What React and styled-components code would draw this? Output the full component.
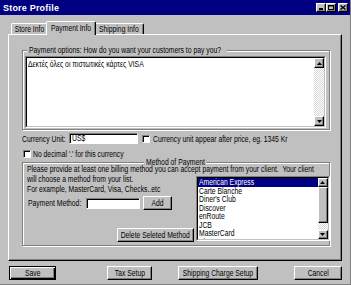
import React from 'react';
import styled, { createGlobalStyle } from 'styled-components';

const GlobalStyle = createGlobalStyle`
  html, body {
    margin: 0;
    padding: 0;
    background: #c0c0c0;
  }
  body {
    font-family: "Liberation Sans", Arial, sans-serif;
    font-size: 8.5px;
    color: #000;
  }
`;

// the dialog text is narrower than any installed face, so squeeze it
const T = styled.span`
  display: inline-block;
  white-space: pre;
  transform: scaleX(0.8);
  transform-origin: ${(p) => (p.$center ? 'center' : 'left')} center;
`;

const Window = styled.div`
  width: 351px;
  height: 285px;
  box-sizing: border-box;
  overflow: hidden;
  background: #c0c0c0;
  border-right: 1px solid #808080;
  border-bottom: 1px solid #808080;
  display: flex;
  flex-direction: column;
`;

const TitleBar = styled.div`
  height: 15px;
  flex-shrink: 0;
  background: #000080;
  display: flex;
  align-items: center;
  padding: 0 2px 0 3px;
`;

const Title = styled.span`
  flex: 1;
  color: #fff;
  font: bold 9px "Liberation Sans", Arial, sans-serif;
  letter-spacing: 0.2px;
`;

const CaptionButton = styled.div`
  width: 10px;
  height: 9px;
  box-sizing: border-box;
  margin-left: ${(p) => p.$gap || 0}px;
  background: #c0c0c0;
  border: 1px solid;
  border-color: #fff #000 #000 #fff;
  box-shadow: inset -1px -1px #808080;
  display: flex;
  align-items: center;
  justify-content: center;
`;

const TabRow = styled.div`
  height: 19px;
  flex-shrink: 0;
  display: flex;
  align-items: flex-end;
  padding-left: 11px;
  position: relative;
  z-index: 1;
`;

const Tab = styled.div`
  width: ${(p) => p.$w}px;
  height: ${(p) => (p.$active ? 14 : 11)}px;
  margin: 0 ${(p) => (p.$active ? -2 : 0)}px ${(p) => (p.$active ? -1 : 0)}px;
  box-sizing: border-box;
  background: #c0c0c0;
  border-top: 1px solid #fff;
  border-left: 1px solid #fff;
  border-right: 1px solid #000;
  box-shadow: inset -1px 0 #808080;
  border-radius: 2px 2px 0 0;
  display: flex;
  align-items: center;
  justify-content: center;
  padding-bottom: ${(p) => (p.$active ? 2 : 0)}px;
  position: relative;
  z-index: ${(p) => (p.$active ? 2 : 1)};
`;

const Panel = styled.div`
  height: 227px;
  flex-shrink: 0;
  margin: 0 8px;
  box-sizing: border-box;
  position: relative;
  z-index: 0;
  border-top: 1px solid #fff;
  border-left: 1px solid #fff;
  border-right: 1px solid #000;
  border-bottom: 1px solid #000;
  box-shadow: inset -1px -1px #808080;
  padding: 10px 11px 0 13px;
  display: flex;
  flex-direction: column;
`;

const Group = styled.fieldset`
  margin: ${(p) => p.$mt || 0}px 0 0;
  padding: ${(p) => p.$pad};
  min-width: 0;
  border: 1px solid #808080;
  box-shadow: inset 1px 1px #fff, 1px 1px #fff;
`;

const Legend = styled.legend`
  width: ${(p) => p.$w}px;
  box-sizing: border-box;
  padding: 0 2px;
  margin: ${(p) => (p.$center ? '0 auto' : '0 0 0 2px')};
  line-height: ${(p) => p.$lh}px;
  background: #c0c0c0;
  white-space: nowrap;
`;

const Sunken = styled.div`
  box-sizing: border-box;
  background: #fff;
  border: 1px solid;
  border-color: #808080 #fff #fff #808080;
`;

const SunkenInner = styled.div`
  height: 100%;
  box-sizing: border-box;
  border-top: 1px solid #000;
  border-left: 1px solid #000;
  border-right: 1px solid #c0c0c0;
  border-bottom: 1px solid #c0c0c0;
  display: flex;
`;

const TextArea = styled(Sunken)`
  height: 72px;
`;

const TextContent = styled.div`
  flex: 1;
  min-width: 0;
  padding: 1px 1px;
  line-height: 10px;
  white-space: nowrap;
`;

const ScrollBar = styled.div`
  width: 10px;
  flex-shrink: 0;
  display: flex;
  flex-direction: column;
  background-color: #fff;
  background-image: conic-gradient(#fff 25%, #d8d8d8 0 50%, #fff 0 75%, #d8d8d8 0);
  background-size: 2px 2px;
`;

const ScrollArrow = styled.div`
  height: ${(p) => p.$h}px;
  flex-shrink: 0;
  box-sizing: border-box;
  background: #c0c0c0;
  border: 1px solid;
  border-color: #fff #000 #000 #fff;
  box-shadow: inset -1px -1px #808080;
  display: flex;
  align-items: center;
  justify-content: center;
`;

const Spacer = styled.div`
  flex: 1;
`;

const Row = styled.div`
  display: flex;
  align-items: center;
  height: ${(p) => p.$h}px;
  margin-top: ${(p) => p.$mt || 0}px;
`;

const Label = styled.span`
  width: ${(p) => (p.$w ? `${p.$w}px` : 'auto')};
  margin-left: ${(p) => p.$ml || 0}px;
  flex-shrink: 0;
  white-space: nowrap;
`;

const Field = styled(Sunken)`
  width: ${(p) => p.$w}px;
  height: 11px;
  box-shadow: inset 1px 1px #000;
  padding: 0 2px;
  line-height: 9px;
  flex-shrink: 0;
`;

const CheckBox = styled.div`
  width: 8px;
  height: 8px;
  box-sizing: border-box;
  margin-left: ${(p) => p.$ml || 0}px;
  margin-right: ${(p) => p.$mr || 0}px;
  flex-shrink: 0;
  background: #fff;
  border: 1px solid;
  border-color: #808080 #fff #fff #808080;
  box-shadow: inset 1px 1px #000;
`;

const Button = styled.div`
  width: ${(p) => p.$w}px;
  height: 14px;
  box-sizing: border-box;
  margin-left: ${(p) => p.$ml || 0}px;
  flex-shrink: 0;
  background: #c0c0c0;
  border: 1px solid;
  border-color: ${(p) => (p.$default ? '#000' : '#fff #000 #000 #fff')};
  box-shadow: ${(p) =>
    p.$default
      ? 'inset 1px 1px #fff, inset -1px -1px #000, inset -2px -2px #808080'
      : 'inset -1px -1px #808080'};
  display: flex;
  align-items: center;
  justify-content: center;
`;

const MethodGrid = styled.div`
  display: grid;
  grid-template-columns: 1fr 134px;
  column-gap: 2px;
  margin-top: -1px;
`;

const Line = styled.div`
  line-height: 10px;
  white-space: nowrap;
  grid-column: ${(p) => (p.$span ? '1 / -1' : 'auto')};
`;

const LeftColumn = styled.div`
  display: flex;
  flex-direction: column;
`;

const ListBox = styled(Sunken)`
  height: 65px;
  margin-top: 2px;
`;

const Items = styled.div`
  flex: 1;
  min-width: 0;
  overflow: hidden;
`;

const Item = styled.div`
  line-height: 8.5px;
  padding-left: 1px;
  white-space: nowrap;
  background: ${(p) => (p.$selected ? '#000080' : 'transparent')};
  color: ${(p) => (p.$selected ? '#fff' : '#000')};
`;

const Footer = styled.div`
  display: flex;
  margin-top: 5px;
  padding-left: 9px;
`;

const Arrow = ({ down }) => (
  <svg width="5" height="3" viewBox="0 0 5 3">
    <polygon points={down ? '0,0 5,0 2.5,3' : '2.5,0 5,3 0,3'} fill="#000" />
  </svg>
);

const methods = [
  'American Express',
  'Carte Blanche',
  "Diner's Club",
  'Discover',
  'enRoute',
  'JCB',
  'MasterCard',
  'Visa',
];

export default function App() {
  return (
    <>
      <GlobalStyle />
      <Window>
        <TitleBar>
          <Title>Store Profile</Title>
          <CaptionButton>
            <svg width="4" height="5" viewBox="0 0 4 5">
              <rect x="0" y="3" width="4" height="2" fill="#000" />
            </svg>
          </CaptionButton>
          <CaptionButton>
            <svg width="6" height="5" viewBox="0 0 6 5">
              <rect x="0.5" y="0.5" width="5" height="4" fill="none" stroke="#000" />
              <rect x="0" y="0" width="6" height="1.5" fill="#000" />
            </svg>
          </CaptionButton>
          <CaptionButton $gap={2}>
            <svg width="6" height="5" viewBox="0 0 6 5">
              <path d="M0.5 0.5 L5.5 4.5 M5.5 0.5 L0.5 4.5" stroke="#000" strokeWidth="1.4" />
            </svg>
          </CaptionButton>
        </TitleBar>

        <TabRow>
          <Tab $w={37}><T $center>Store Info</T></Tab>
          <Tab $w={50} $active><T $center>Payment Info</T></Tab>
          <Tab $w={50}><T $center>Shipping Info</T></Tab>
        </TabRow>

        <Panel>
          <Group $pad="1px 3px 1px 2px">
            <Legend $lh={10} $w={200}>
              <T>Payment options: How do you want your customers to pay you?</T>
            </Legend>
            <TextArea>
              <SunkenInner>
                <TextContent><T>Δεκτές όλες οι πιστωτικές κάρτες VISA</T></TextContent>
                <ScrollBar>
                  <ScrollArrow $h={10}><Arrow /></ScrollArrow>
                  <Spacer />
                  <ScrollArrow $h={10}><Arrow down /></ScrollArrow>
                </ScrollBar>
              </SunkenInner>
            </TextArea>
          </Group>

          <Row $h={11} $mt={3}>
            <Label $w={47}><T>Currency Unit:</T></Label>
            <Field $w={69}><T>US$</T></Field>
            <CheckBox $ml={4} $mr={3} />
            <T>Currency unit appear after price, eg. 1345 Kr</T>
          </Row>

          <Row $h={9} $mt={5}>
            <CheckBox $ml={1} $mr={2} />
            <T>No decimal '.' for this currency</T>
          </Row>

          <Group $mt={1} $pad="0 6px 3px 4px">
            <Legend $lh={6} $w={62} $center>
              <T>Method of Payment</T>
            </Legend>
            <MethodGrid>
              <Line $span>
                <T>Please provide at least one billing method you can accept payment from your client.  Your client</T>
              </Line>
              <LeftColumn>
                <Line><T>will choose a method from your list.</T></Line>
                <Line><T>For example, MasterCard, Visa, Checks..etc</T></Line>
                <Row $h={14} $mt={2}>
                  <Label $w={58} $ml={1}><T>Payment Method:</T></Label>
                  <Field $w={54} />
                  <Button $w={29} $ml={3}><T $center>Add</T></Button>
                </Row>
                <Row $h={14} $mt={18}>
                  <Spacer />
                  <Button $w={77}><T $center>Delete Seleted Method</T></Button>
                </Row>
              </LeftColumn>
              <ListBox>
                <SunkenInner>
                  <Items>
                    {methods.map((m, i) => (
                      <Item key={m} $selected={i === 0}><T>{m}</T></Item>
                    ))}
                  </Items>
                  <ScrollBar>
                    <ScrollArrow $h={9}><Arrow /></ScrollArrow>
                    <ScrollArrow $h={36} />
                    <Spacer />
                    <ScrollArrow $h={9}><Arrow down /></ScrollArrow>
                  </ScrollBar>
                </SunkenInner>
              </ListBox>
            </MethodGrid>
          </Group>
        </Panel>

        <Footer>
          <Button $w={47} $default><T $center>Save</T></Button>
          <Button $w={45} $ml={51}><T $center>Tax Setup</T></Button>
          <Button $w={80} $ml={26}><T $center>Shipping Charge Setup</T></Button>
          <Button $w={48} $ml={36}><T $center>Cancel</T></Button>
        </Footer>
      </Window>
    </>
  );
}
